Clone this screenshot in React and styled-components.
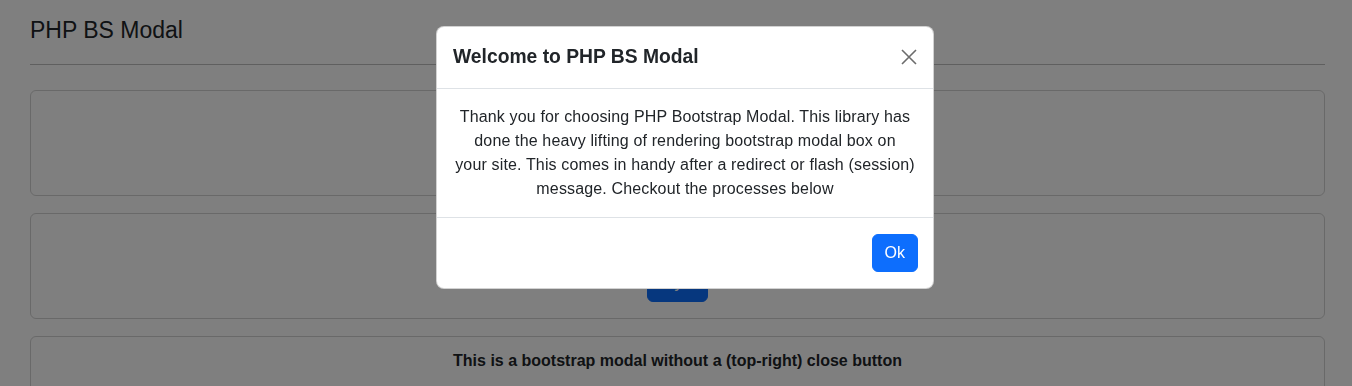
import styled, { createGlobalStyle } from "styled-components"

const GlobalStyle = createGlobalStyle`
  * { box-sizing: border-box; }
  body {
    margin: 0;
    font-family: "Liberation Sans", Arial, sans-serif;
    font-size: 16px;
    line-height: 1.5;
    color: #212529;
    background: #fff;
    overflow: hidden;
  }
`

const Page = styled.div`
  padding: 0 27px 0 30px;
`

const Title = styled.h4`
  margin: 17px 0 0;
  font-size: 23px;
  font-weight: 400;
  line-height: 1.2;
`

const Divider = styled.hr`
  margin: 19px 0 25px;
  border: 0;
  border-top: 1px solid rgba(0, 0, 0, 0.25);
`

const CardList = styled.div`
  display: flex;
  flex-direction: column;
  gap: 17px;
`

const Card = styled.div`
  border: 1px solid rgba(0, 0, 0, 0.175);
  border-radius: 6px;
  padding: 12px 16px 16px;
  text-align: center;
`

const CardText = styled.p`
  margin: 0 0 14px;
  font-weight: ${(p) => (p.$bold ? 700 : 400)};
`

const Button = styled.button`
  font: inherit;
  color: #fff;
  background: #0d6efd;
  border: 1px solid #0d6efd;
  border-radius: 6px;
  padding: 6px 12px;
  line-height: 1.5;
  cursor: pointer;
`

const Backdrop = styled.div`
  position: fixed;
  inset: 0;
  background: rgba(0, 0, 0, 0.5);
`

const Dialog = styled.div`
  position: fixed;
  top: 26px;
  left: 50%;
  width: 498px;
  margin-left: -240px;
  background: #fff;
  border: 1px solid rgba(0, 0, 0, 0.175);
  border-radius: 8px;
  display: flex;
  flex-direction: column;
`

const DialogHeader = styled.div`
  display: flex;
  align-items: center;
  justify-content: space-between;
  padding: 16px;
  height: 62px;
  border-bottom: 1px solid #dee2e6;
`

const DialogTitle = styled.h5`
  margin: 0;
  font-size: 19.3px;
  font-weight: 700;
  line-height: 1.5;
`

const CloseButton = styled.button`
  width: 24px;
  height: 24px;
  padding: 4px;
  margin: -2px -4px 0 0;
  border: 0;
  background: transparent;
  display: flex;
  align-items: center;
  justify-content: center;
  cursor: pointer;
`

const DialogBody = styled.div`
  padding: 16px;
  text-align: center;
  letter-spacing: 0.15px;
`

const DialogFooter = styled.div`
  display: flex;
  justify-content: flex-end;
  padding: 16px 15px 16px;
  border-top: 1px solid #dee2e6;
`

export default function App() {
  return (
    <>
      <GlobalStyle />
      <Page>
        <Title>PHP BS Modal</Title>
        <Divider />
        <CardList>
          <Card>
            <CardText>This is a default bootstrap modal</CardText>
            <Button>Try it</Button>
          </Card>
          <Card>
            <CardText>This is a modal with a custom footer</CardText>
            <Button>Try it</Button>
          </Card>
          <Card>
            <CardText $bold>This is a bootstrap modal without a (top-right) close button</CardText>
            <Button>Try it</Button>
          </Card>
        </CardList>
      </Page>
      <Backdrop />
      <Dialog>
        <DialogHeader>
          <DialogTitle>Welcome to PHP BS Modal</DialogTitle>
          <CloseButton aria-label="Close">
            <svg width="16" height="16" viewBox="0 0 16 16">
              <path d="M1 1L15 15M15 1L1 15" stroke="#6c6c6c" strokeWidth="1.6" />
            </svg>
          </CloseButton>
        </DialogHeader>
        <DialogBody>
          Thank you for choosing PHP Bootstrap Modal. This library has<br />
          done the heavy lifting of rendering bootstrap modal box on<br />
          your site. This comes in handy after a redirect or flash (session)<br />
          message. Checkout the processes below
        </DialogBody>
        <DialogFooter>
          <Button>Ok</Button>
        </DialogFooter>
      </Dialog>
    </>
  )
}
